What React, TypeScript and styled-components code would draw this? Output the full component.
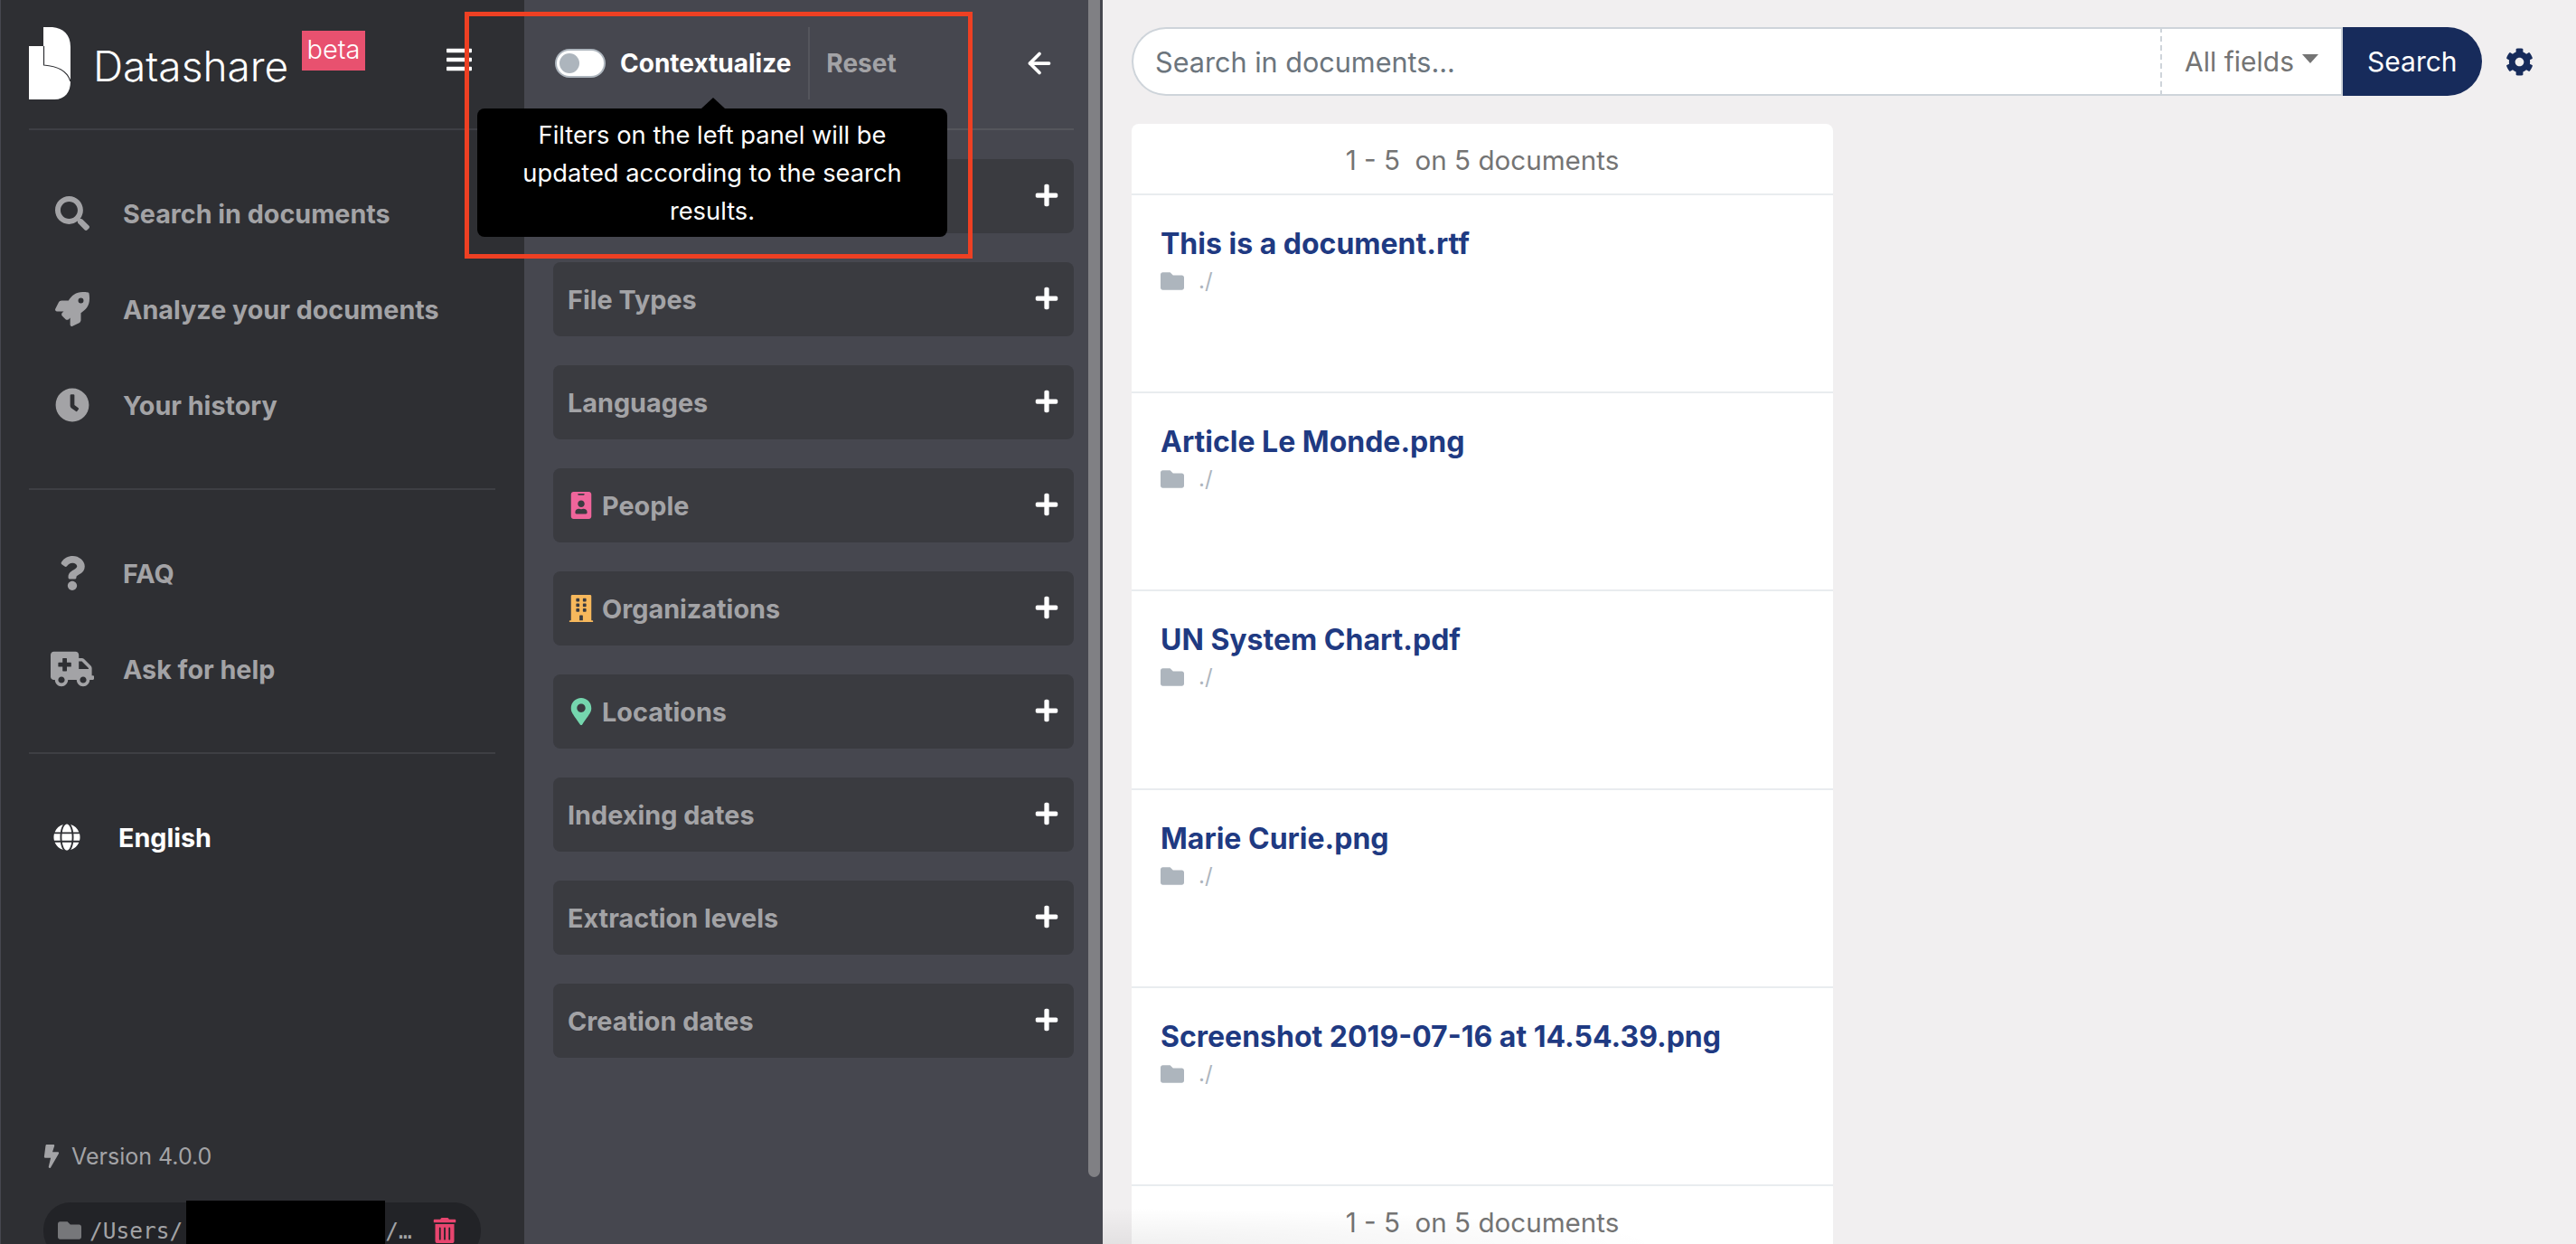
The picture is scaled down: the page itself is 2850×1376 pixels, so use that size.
import styled, { createGlobalStyle } from 'styled-components';
import {
  FaAmbulance,
  FaBars,
  FaBolt,
  FaBuilding,
  FaClock,
  FaCog,
  FaFolder,
  FaGlobe,
  FaIdBadge,
  FaMapMarkerAlt,
  FaPlus,
  FaQuestion,
  FaRocket,
  FaSearch,
  FaTrashAlt,
} from 'react-icons/fa';
import { ArrowLeft } from 'lucide-react';

const GlobalStyle = createGlobalStyle`
  html, body {
    margin: 0;
    padding: 0;
    height: 1376px;
    overflow: hidden;
    background: #f1eff0;
    font-family: Inter, "Liberation Sans", sans-serif;
  }
`;

const Page = styled.div`
  position: relative;
  display: grid;
  grid-template-columns: 580px 640px 1fr;
  width: 2850px;
  height: 1376px;
  overflow: hidden;
`;

const Sidebar = styled.aside`
  box-sizing: border-box;
  display: flex;
  flex-direction: column;
  height: 1376px;
  padding: 0 32px 0 31px;
  background: #2e2f33;
  border-left: 1px solid #46474f;
`;

const Brand = styled.div`
  flex: none;
  box-sizing: border-box;
  display: flex;
  align-items: flex-start;
  height: 144px;
  padding-top: 30px;
  border-bottom: 2px solid #3e3f44;
`;

const BrandName = styled.span`
  width: 217px;
  margin: 21px 0 0 25px;
  font-size: 46px;
  line-height: 44px;
  font-weight: 300;
  color: #fff;
`;

const Beta = styled.span`
  width: 70px;
  height: 44px;
  margin: 4px 0 0 14px;
  background: #e8516f;
  color: #fff;
  font-size: 29px;
  line-height: 42px;
  text-align: center;
  font-weight: 300;
`;

const Burger = styled.span`
  display: flex;
  margin: 20px 0 0 88px;
  color: #fff;
  font-size: 32px;
`;

const NavGroup = styled.nav`
  flex: none;
  box-sizing: border-box;
  padding: 39px 0;
  border-bottom: 2px solid #3e3f44;
`;

const NavRow = styled.a`
  display: grid;
  grid-template-columns: 96px 1fr;
  column-gap: 8px;
  align-items: center;
  height: 106px;
  color: #a3a3a6;
  font-size: 28.7px;
  font-weight: 700;
`;

const NavIcon = styled.span<{ $size: number }>`
  display: flex;
  justify-content: center;
  font-size: ${(p) => p.$size}px;
`;

const Language = styled.div`
  flex: none;
  display: grid;
  grid-template-columns: 84px 1fr;
  column-gap: 15px;
  align-items: center;
  height: 184px;
  color: #fff;
  font-size: 28.7px;
  font-weight: 700;
  svg {
    justify-self: center;
    font-size: 30px;
  }
`;

const Version = styled.div`
  flex: none;
  display: flex;
  align-items: center;
  gap: 12px;
  height: 40px;
  margin: 241px 0 0 16px;
  color: #a3a3a6;
  font-size: 25px;
  svg {
    font-size: 26px;
    margin-right: -3px;
    margin-left: -4px;
  }
`;

const PathPill = styled.div`
  flex: none;
  box-sizing: border-box;
  display: flex;
  align-items: center;
  width: 484px;
  height: 62px;
  margin: 31px 0 0 16px;
  padding: 0 26px 0 16px;
  background: #222327;
  border-radius: 30px;
  color: #a3a3a6;
  font-family: "DejaVu Sans Mono", "Liberation Mono", monospace;
  font-size: 24.5px;
  white-space: nowrap;
`;

const PathFolder = styled(FaFolder)`
  flex: none;
  margin-right: 9px;
  font-size: 26px;
  color: #76777a;
`;

const Redaction = styled.span`
  flex: none;
  width: 220px;
  height: 64px;
  margin: -2px 0 0 4px;
  background: #000;
`;

const PathTrash = styled(FaTrashAlt)`
  flex: none;
  margin-left: auto;
  font-size: 28px;
  color: #e8456f;
`;

const Panel = styled.section`
  position: relative;
  box-sizing: border-box;
  height: 1376px;
  padding: 0 32px;
  background: #46474f;
`;

const Scrollbar = styled.div`
  position: absolute;
  top: 0;
  right: 3px;
  width: 13px;
  height: 1302px;
  background: #808084;
  border-radius: 0 0 7px 7px;
`;

const PanelHead = styled.header`
  box-sizing: border-box;
  display: flex;
  align-items: center;
  height: 144px;
  padding: 0 20px 2px 2px;
  border-bottom: 2px solid #55565c;
`;

const Toggle = styled.span`
  flex: none;
  box-sizing: border-box;
  width: 56px;
  height: 32px;
  padding: 3px;
  background: #fff;
  border: 2px solid #adb5bd;
  border-radius: 16px;
  &::before {
    content: '';
    display: block;
    width: 22px;
    height: 22px;
    background: #adb5bd;
    border-radius: 50%;
  }
`;

const ToggleLabel = styled.span`
  margin-left: 16px;
  color: #fff;
  font-size: 28px;
  font-weight: 700;
`;

const Reset = styled.span`
  display: flex;
  align-items: center;
  height: 80px;
  margin-left: 19px;
  padding-left: 18px;
  border-left: 2px solid #55565c;
  color: #a3a3a6;
  font-size: 28px;
  font-weight: 700;
`;

const Back = styled(ArrowLeft)`
  margin-left: auto;
  color: #fff;
`;

const FilterList = styled.div`
  display: flex;
  flex-direction: column;
  gap: 32px;
  padding-top: 32px;
`;

const FilterCard = styled.div`
  box-sizing: border-box;
  display: flex;
  align-items: center;
  height: 82px;
  padding: 0 16px;
  background: #3a3b40;
  border-radius: 8px;
  color: #a3a3a6;
  font-size: 28.8px;
  font-weight: 700;
`;

const FilterIcon = styled.span<{ $color: string }>`
  display: flex;
  margin-right: 8px;
  color: ${(p) => p.$color};
  font-size: 30px;
`;

const Plus = styled(FaPlus)`
  margin-left: auto;
  color: #fff;
  font-size: 28px;
  transform: translateY(-1px);
`;

const Tooltip = styled.div`
  position: absolute;
  left: 528px;
  top: 120px;
  box-sizing: border-box;
  width: 520px;
  height: 142px;
  padding: 9px 40px;
  background: #000;
  border-radius: 8px;
  color: #fff;
  font-size: 27.3px;
  line-height: 42px;
  text-align: center;
  &::before {
    content: '';
    position: absolute;
    left: 248px;
    top: -12px;
    border: 13px solid transparent;
    border-top: 0;
    border-bottom: 12px solid #000;
  }
`;

const Annotation = styled.div`
  position: absolute;
  left: 514px;
  top: 13px;
  box-sizing: border-box;
  width: 562px;
  height: 273px;
  border: 5px solid #ee4023;
`;

const Main = styled.main`
  position: relative;
  box-sizing: border-box;
  height: 1376px;
  padding: 30px 0 0 32px;
  background: #f1eff0;
  &::after {
    content: '';
    position: absolute;
    left: 0;
    bottom: 0;
    width: 620px;
    height: 40px;
    background: radial-gradient(
      ellipse 620px 40px at 0 100%,
      rgba(0, 0, 0, 0.06),
      transparent
    );
  }
`;

const SearchRow = styled.div`
  display: flex;
  align-items: center;
  height: 76px;
`;

const SearchField = styled.div`
  box-sizing: border-box;
  display: flex;
  align-items: center;
  width: 1138px;
  height: 76px;
  padding-left: 24px;
  background: #fff;
  border: 2px solid #ced4da;
  border-right: 0;
  border-radius: 38px 0 0 38px;
  color: #6c757d;
  font-size: 30.6px;
`;

const FieldSelect = styled.div`
  box-sizing: border-box;
  display: flex;
  align-items: center;
  width: 202px;
  height: 76px;
  padding-left: 25px;
  background: #fff;
  border: 2px solid #ced4da;
  border-left: 2px dashed #ced4da;
  color: #747474;
  font-size: 30px;
  &::after {
    content: '';
    margin-left: 9px;
    border: 9px solid transparent;
    border-top: 10px solid #747474;
    border-bottom: 0;
    transform: translateY(-3px);
  }
`;

const SearchButton = styled.div`
  box-sizing: border-box;
  display: flex;
  align-items: center;
  width: 154px;
  height: 76px;
  padding-left: 27px;
  background: #172b5b;
  border-radius: 0 38px 38px 0;
  color: #fff;
  font-size: 30px;
`;

const Gear = styled(FaCog)`
  margin-left: 26px;
  font-size: 31px;
  color: #172b5b;
`;

const Results = styled.div`
  box-sizing: border-box;
  width: 776px;
  margin-top: 31px;
  background: #fff;
  border-radius: 8px 8px 0 0;
`;

const Summary = styled.div`
  box-sizing: border-box;
  height: 79px;
  padding-top: 22px;
  border-bottom: 2px solid #e9ecef;
  color: #747474;
  font-size: 29.6px;
  line-height: 36px;
  text-align: center;
`;

const Doc = styled.article`
  box-sizing: border-box;
  height: 219.2px;
  padding: 34px 32px 0;
  border-bottom: 2px solid #e9ecef;
`;

const DocTitle = styled.a`
  display: block;
  color: #1f3a82;
  font-size: 32px;
  line-height: 40px;
  font-weight: 700;
`;

const DocPath = styled.div`
  display: flex;
  align-items: center;
  gap: 16px;
  margin-top: 4px;
  color: #adb5bd;
  font-size: 24px;
  line-height: 34px;
  svg {
    font-size: 26px;
  }
`;

const FILTERS = [
  { id: 'projects', name: '' },
  { id: 'types', name: 'File Types' },
  { id: 'languages', name: 'Languages' },
  { id: 'people', name: 'People', icon: <FaIdBadge />, color: '#f0659b' },
  { id: 'orgs', name: 'Organizations', icon: <FaBuilding />, color: '#f7b85c' },
  { id: 'locations', name: 'Locations', icon: <FaMapMarkerAlt />, color: '#75d6ae' },
  { id: 'indexing', name: 'Indexing dates' },
  { id: 'levels', name: 'Extraction levels' },
  { id: 'creation', name: 'Creation dates' },
];

const DOCS = [
  'This is a document.rtf',
  'Article Le Monde.png',
  'UN System Chart.pdf',
  'Marie Curie.png',
  'Screenshot 2019-07-16 at 14.54.39.png',
];

const Logo = () => (
  <svg width="46" height="80" viewBox="0 0 46 80">
    <path
      fill="#fff"
      d="M17 0H26C38 1 46 8 46 22V60C46 72 40 80 28 80H0V21H16V0Z"
    />
    <path
      fill="none"
      stroke="#2e2f33"
      strokeWidth="1.2"
      d="M16.5 21V42C30 43 42 47 46 60"
    />
  </svg>
);

const App = () => {
  return (
    <Page>
      <GlobalStyle />
      <Sidebar>
        <Brand>
          <Logo />
          <BrandName>Datashare</BrandName>
          <Beta>beta</Beta>
          <Burger>
            <FaBars />
          </Burger>
        </Brand>
        <NavGroup>
          <NavRow>
            <NavIcon $size={38}>
              <FaSearch />
            </NavIcon>
            Search in documents
          </NavRow>
          <NavRow>
            <NavIcon $size={38}>
              <FaRocket />
            </NavIcon>
            Analyze your documents
          </NavRow>
          <NavRow>
            <NavIcon $size={38}>
              <FaClock />
            </NavIcon>
            Your history
          </NavRow>
        </NavGroup>
        <NavGroup>
          <NavRow>
            <NavIcon $size={38}>
              <FaQuestion />
            </NavIcon>
            FAQ
          </NavRow>
          <NavRow>
            <NavIcon $size={48}>
              <FaAmbulance />
            </NavIcon>
            Ask for help
          </NavRow>
        </NavGroup>
        <Language>
          <FaGlobe />
          English
        </Language>
        <Version>
          <FaBolt />
          Version 4.0.0
        </Version>
        <PathPill>
          <PathFolder />
          /Users/
          <Redaction />
          /…
          <PathTrash />
        </PathPill>
      </Sidebar>
      <Panel>
        <PanelHead>
          <Toggle />
          <ToggleLabel>Contextualize</ToggleLabel>
          <Reset>Reset</Reset>
          <Back size={36} strokeWidth={2.5} />
        </PanelHead>
        <FilterList>
          {FILTERS.map((filter) => (
            <FilterCard key={filter.id}>
              {filter.icon && (
                <FilterIcon $color={filter.color}>{filter.icon}</FilterIcon>
              )}
              {filter.name}
              <Plus />
            </FilterCard>
          ))}
        </FilterList>
        <Scrollbar />
      </Panel>
      <Main>
        <SearchRow>
          <SearchField>Search in documents...</SearchField>
          <FieldSelect>All fields</FieldSelect>
          <SearchButton>Search</SearchButton>
          <Gear />
        </SearchRow>
        <Results>
          <Summary>1 - 5 &nbsp;on 5 documents</Summary>
          {DOCS.map((doc) => (
            <Doc key={doc}>
              <DocTitle>{doc}</DocTitle>
              <DocPath>
                <FaFolder />
                ./
              </DocPath>
            </Doc>
          ))}
          <Summary>1 - 5 &nbsp;on 5 documents</Summary>
        </Results>
      </Main>
      <Tooltip>
        Filters on the left panel will be updated according to the search
        results.
      </Tooltip>
      <Annotation />
    </Page>
  );
};

export default App;
